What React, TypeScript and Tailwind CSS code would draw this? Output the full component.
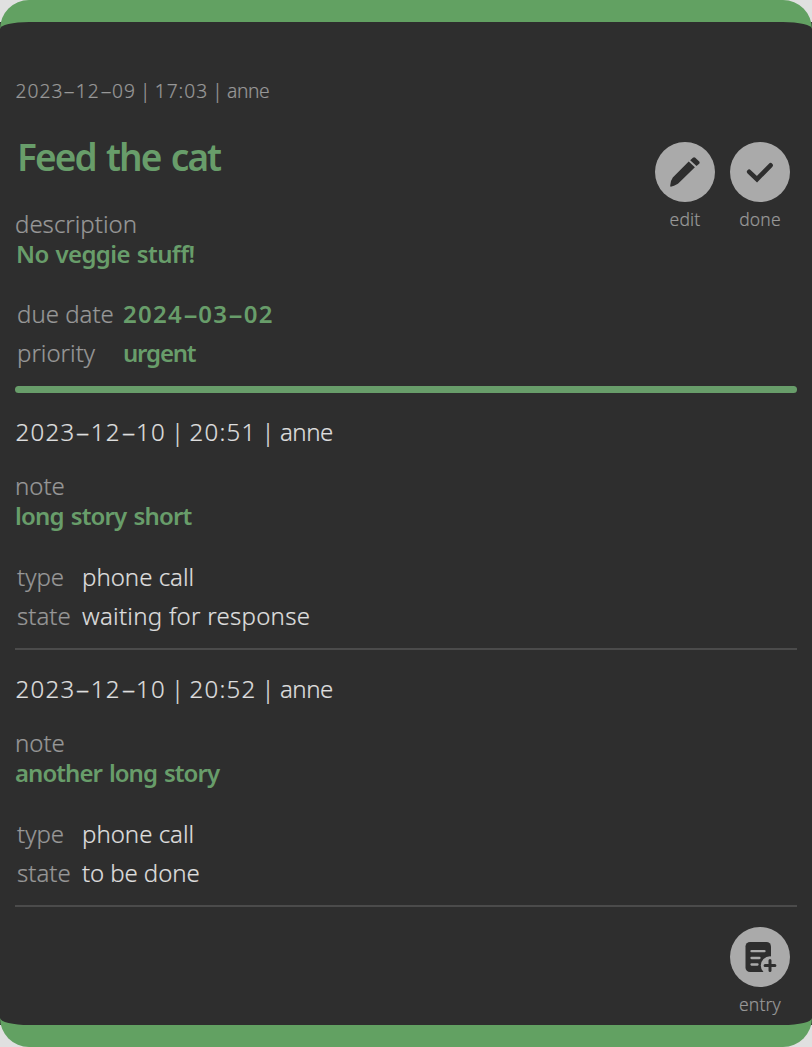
import type { ReactNode } from "react";

function DateText({ value }: { value: string }) {
  const parts = value.split("-");
  return (
    <span className="inline-block w-[6.25em] whitespace-nowrap tracking-[0.053em]">
      {parts.map((part, i) => (
        <span key={i}>
          {i > 0 && <span className="inline-block w-[0.64em] scale-x-[1.9] text-center tracking-normal">-</span>}
          {part}
        </span>
      ))}
    </span>
  );
}

function Stamp({ date, time, user, className }: { date: string; time: string; user: string; className: string }) {
  return (
    <div className={`flex h-[30px] pl-[0.5px] leading-[30px] ${className}`}>
      <DateText value={date} />
      <span className="w-[1em] text-center">|</span>
      <span className="w-[2.77em] tracking-[0.052em]">{time}</span>
      <span className="w-[1em] text-center">|</span>
      <span className="tracking-[-0.02em]">{user}</span>
    </div>
  );
}

function Row({ label, labelWidth, children }: { label: string; labelWidth: string; children: ReactNode }) {
  return (
    <div className="flex h-[39px] pl-0.5 leading-[40px]">
      <dt className={`${labelWidth} text-[#989898]`}>{label}</dt>
      <dd>{children}</dd>
    </div>
  );
}

function CircleButton({ label, children }: { label: string; children: ReactNode }) {
  return (
    <button className="flex w-[60px] flex-col items-center">
      <span className="flex size-[60px] items-center justify-center rounded-full bg-[#aaaaaa] text-[#2e2e2e]">{children}</span>
      <span className="mt-[5px] text-[17.5px] leading-6 tracking-[0.01em] text-[#989898]">{label}</span>
    </button>
  );
}

function Entry({ time, note, noteStyle, state, stateStyle }: { time: string; note: string; noteStyle: string; state: string; stateStyle: string }) {
  return (
    <article className="h-[257px] pt-6">
      <Stamp date="2023-12-10" time={time} user="anne" className="text-[#dedede]" />
      <p className="mt-6 leading-[30px] text-[#989898]">note</p>
      <p className={`h-[30px] leading-[29px] font-semibold text-[#689d6a] ${noteStyle}`}>{note}</p>
      <dl className="mt-[26px] text-[#dedede]">
        <Row label="type" labelWidth="w-[65px]">phone call</Row>
        <Row label="state" labelWidth="w-[65px]"><span className={stateStyle}>{state}</span></Row>
      </dl>
      <hr className="mt-[13px] border-t-2 border-[#4b4b4b]" />
    </article>
  );
}

export default function App() {
  return (
    <div className="h-[1047px] w-[812px] bg-[linear-gradient(#e0e0e0_22px,#2e2e2e_22px,#2e2e2e_1025px,#e0e0e0_1025px)]">
      <main className="flex h-full flex-col rounded-[29px] border-y-[22px] border-[#62a162] bg-[#2e2e2e] px-[15px] font-['Noto_Sans',sans-serif] text-[24px] font-[350] antialiased [-webkit-text-stroke:0.2px]">
        <Stamp date="2023-12-09" time="17:03" user="anne" className="mt-[54px] text-[19.2px] text-[#989898]" />
        <div className="flex h-[280px] justify-between">
          <section>
            <h1 className="mt-[31px] pl-[2px] text-[37px] leading-[40px] font-semibold tracking-[-0.052em] text-[#689d6a] [word-spacing:0.07em] [-webkit-text-stroke:0]">Feed the cat</h1>
            <p className="mt-[32px] leading-[30px] text-[#989898]">description</p>
            <p className="h-[30px] pl-px leading-[29px] font-semibold tracking-[-0.025em] text-[#689d6a] [word-spacing:0.05em] [-webkit-text-stroke:0]">No veggie stuff!</p>
            <dl className="mt-[25px] text-[#689d6a]">
              <Row label="due date" labelWidth="w-[106px]">
                <span className="font-semibold [-webkit-text-stroke:0]"><DateText value="2024-03-02" /></span>
              </Row>
              <Row label="priority" labelWidth="w-[106px]">
                <span className="font-semibold tracking-[-0.05em] [-webkit-text-stroke:0]">urgent</span>
              </Row>
            </dl>
          </section>
          <nav className="mt-9 mr-[7px] flex gap-[15px]">
            <CircleButton label="edit">
              <svg className="size-[60px]" viewBox="0 0 60 60" fill="currentColor" aria-hidden="true">
                <path d="M33.7 19.5L39.9 25.2L23.5 41.2Q22 42.6 16.5 44.6Q15 45 15.2 43.4Q15.8 38 17.8 35.5Z" />
                <path d="M35.2 18.2L37.9 15.7Q39.1 14.6 40.3 15.7L44.2 19.5Q45.2 20.6 44.2 21.7L41.5 24.1Z" />
              </svg>
            </CircleButton>
            <CircleButton label="done">
              <svg className="size-[60px]" viewBox="0 0 60 60" fill="none" stroke="currentColor" strokeWidth="4.6" strokeLinecap="round" strokeLinejoin="miter" aria-hidden="true">
                <path d="M19.2 29.8L27 37.2L40.6 23.3" />
              </svg>
            </CircleButton>
          </nav>
        </div>
        <hr className="h-[7px] shrink-0 rounded-full border-0 bg-[#689d6a]" />
        <Entry time="20:51" note="long story short" noteStyle="tracking-[-0.035em] [word-spacing:0.07em] [-webkit-text-stroke:0]" state="waiting for response" stateStyle="tracking-[0.011em]" />
        <Entry time="20:52" note="another long story" noteStyle="tracking-[-0.04em] [word-spacing:0.07em] [-webkit-text-stroke:0]" state="to be done" stateStyle="tracking-[-0.004em]" />
        <div className="mt-5 mr-[7px] self-end">
          <CircleButton label="entry">
            <svg className="size-[60px]" viewBox="0 0 60 60" aria-hidden="true">
              <rect x="15.5" y="15" width="25.5" height="30" rx="4.5" fill="#2e2e2e" />
              <path d="M21.5 24.2H34.5M21.5 31H29.5M21.5 37.5H27.5" stroke="#aaaaaa" strokeWidth="2.3" strokeLinecap="round" />
              <circle cx="40" cy="38.5" r="9.2" fill="#aaaaaa" />
              <path d="M40 33.6V43.4M35.1 38.5H44.9" stroke="#2e2e2e" strokeWidth="3" strokeLinecap="round" />
            </svg>
          </CircleButton>
        </div>
      </main>
    </div>
  );
}
